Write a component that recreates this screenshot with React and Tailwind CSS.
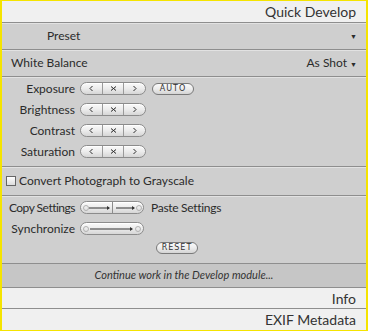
import React from "react";

const font = { fontFamily: "Lato, 'Open Sans', sans-serif" };

const Pill = ({ children, className = "" }) => (
  <div
    className={
      "flex h-[13px] items-stretch rounded-full border border-[#8c8c8c] bg-gradient-to-b from-[#fafafa] via-[#ececec] to-[#d6d6d6] shadow-[inset_0_1px_0_#fff] overflow-hidden " +
      className
    }
  >
    {children}
  </div>
);

const Glyph = ({ d }) => (
  <svg width="7" height="7" viewBox="0 0 7 7">
    <path d={d} fill="none" stroke="#2a2a2a" strokeWidth="1" />
  </svg>
);

const Stepper = () => (
  <Pill className="w-[66px]">
    <span className="flex w-[22px] items-center justify-center">
      <Glyph d="M4.5 1 L2 3.5 L4.5 6" />
    </span>
    <span className="flex w-[22px] items-center justify-center border-x border-[#9a9a9a]">
      <Glyph d="M1 1.5 L6 5.5 M6 1.5 L1 5.5" />
    </span>
    <span className="flex w-[22px] items-center justify-center">
      <Glyph d="M2.5 1 L5 3.5 L2.5 6" />
    </span>
  </Pill>
);

const SmallBtn = ({ label }) => (
  <div
    className="flex h-[12px] w-[42px] items-center justify-center rounded-full border border-[#7a7a7a] bg-gradient-to-b from-[#fafafa] via-[#ececec] to-[#d4d4d4] text-[8px] tracking-[1px] leading-none text-[#333]"
    style={{ fontFamily: "'DejaVu Sans', sans-serif" }}
  >
    {label}
  </div>
);

const Arrow = ({ w }) => (
  <svg width={w} height="10" viewBox={`0 0 ${w} 10`} className="shrink-0">
    <circle cx="5" cy="5" r="2.5" fill="none" stroke="#b0b0b0" strokeWidth="1" />
    <line x1="8" y1="5" x2={w - 3} y2="5" stroke="#333" strokeWidth="1" />
    <path d={`M${w - 5} 3 L${w - 2} 5 L${w - 5} 7 Z`} fill="#333" />
  </svg>
);

const ArrowEnd = ({ w }) => (
  <svg width={w} height="10" viewBox={`0 0 ${w} 10`} className="shrink-0">
    <line x1="3" y1="5" x2={w - 10} y2="5" stroke="#333" strokeWidth="1" />
    <path d={`M${w - 12} 3 L${w - 9} 5 L${w - 12} 7 Z`} fill="#333" />
    <circle cx={w - 5} cy="5" r="2.5" fill="none" stroke="#b0b0b0" strokeWidth="1" />
  </svg>
);

const Sep = () => <div className="h-px bg-[#8e8e8e] shadow-[0_1px_0_#e2e2e2]" />;

const Label = ({ children, className = "" }) => (
  <div className={"w-[78px] shrink-0 whitespace-nowrap pr-[5px] text-right text-[12px] text-[#2b2b2b] " + className}>
    {children}
  </div>
);

const Row = ({ label, extra }) => (
  <div className="flex h-[21px] items-center">
    <Label>{label}</Label>
    <Stepper />
    {extra}
  </div>
);

export default function App() {
  return (
    <div className="h-[331px] w-[368px] bg-[#f5e400] pl-[2px] pr-[2px] pt-[1px] pb-[1px]" style={font}>
      <div className="flex h-full flex-col bg-[#cfcfcf] text-[#2b2b2b]">
        <div className="flex h-[21px] items-center justify-end bg-[#f0f0f0] pr-[10px] text-[14px] text-[#333]">
          Quick Develop
        </div>
        <Sep />
        <div className="flex h-[26px] items-center justify-between pl-[45px] pr-[9px] text-[12px]">
          <span>Preset</span>
          <span className="text-[7px]">&#9660;</span>
        </div>
        <Sep />
        <div className="flex h-[26px] items-center justify-between pl-[9px] pr-[9px] text-[12px]">
          <span>White Balance</span>
          <span>
            As Shot <span className="text-[7px]">&#9660;</span>
          </span>
        </div>
        <Sep />
        <div className="flex flex-col pt-[1px] pb-[4px]">
          <Row
            label="Exposure"
            extra={
              <div className="ml-[6px]">
                <SmallBtn label="AUTO" />
              </div>
            }
          />
          <Row label="Brightness" />
          <Row label="Contrast" />
          <Row label="Saturation" />
        </div>
        <Sep />
        <div className="flex h-[28px] items-center gap-[3px] pl-[4px] text-[12px]">
          <span className="h-[10px] w-[10px] border border-[#666] bg-gradient-to-b from-white to-[#dcdcdc]" />
          <span>Convert Photograph to Grayscale</span>
        </div>
        <Sep />
        <div className="flex flex-col pt-[1px]">
          <div className="flex h-[21px] items-center">
            <Label className="tracking-[-0.5px]">Copy Settings</Label>
            <Pill className="w-[64px]">
              <span className="flex w-[32px] items-center border-r border-[#8c8c8c]">
                <Arrow w={31} />
              </span>
              <span className="flex w-[32px] items-center">
                <ArrowEnd w={31} />
              </span>
            </Pill>
            <span className="ml-[7px] whitespace-nowrap text-[12px] tracking-[-0.3px]">Paste Settings</span>
          </div>
          <div className="flex h-[21px] items-center">
            <Label>Synchronize</Label>
            <Pill className="w-[64px]">
              <span className="flex items-center">
                <svg width="62" height="10" viewBox="0 0 62 10">
                  <circle cx="5" cy="5" r="2.5" fill="none" stroke="#b0b0b0" strokeWidth="1" />
                  <line x1="9" y1="5" x2="51" y2="5" stroke="#333" strokeWidth="1" />
                  <path d="M49 3 L52 5 L49 7 Z" fill="#333" />
                  <circle cx="57" cy="5" r="2.5" fill="none" stroke="#b0b0b0" strokeWidth="1" />
                </svg>
              </span>
            </Pill>
          </div>
          <div className="flex h-[18px] items-center pl-[154px]">
            <SmallBtn label="RESET" />
          </div>
        </div>
        <div className="flex-1" />
        <Sep />
        <div className="flex h-[23px] items-center justify-center bg-[#c6c6c6] text-[11px] italic text-[#333]">
          Continue work in the Develop module...
        </div>
        <Sep />
        <div className="flex h-[20px] items-center justify-end bg-[#f0f0f0] pr-[10px] text-[14px] text-[#333]">
          Info
        </div>
        <Sep />
        <div className="flex h-[21px] items-center justify-end bg-[#f0f0f0] pr-[10px] text-[14px] text-[#333]">
          EXIF Metadata
        </div>
      </div>
    </div>
  );
}
